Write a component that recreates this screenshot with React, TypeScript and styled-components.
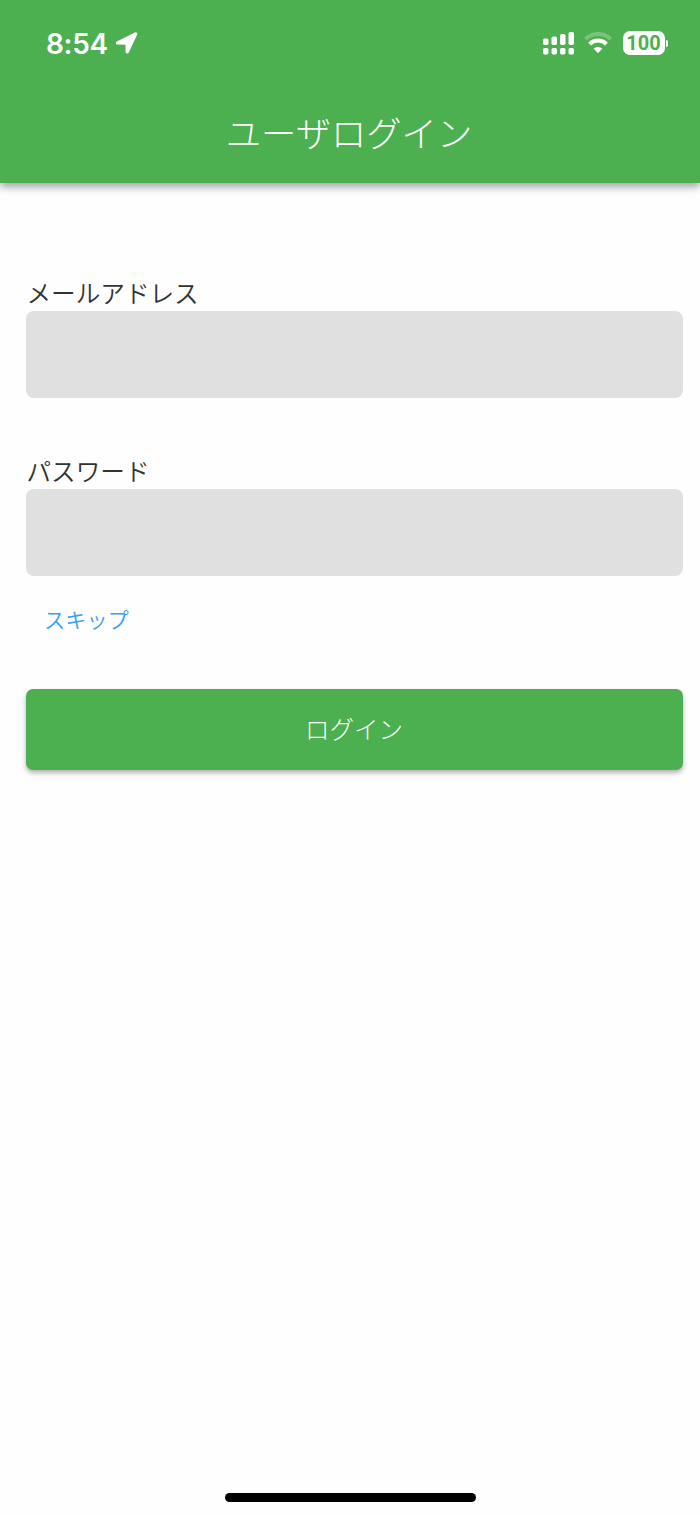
import React from "react";
import styled, { createGlobalStyle } from "styled-components";

const GlobalStyle = createGlobalStyle`
  * { box-sizing: border-box; }
  html, body { margin: 0; padding: 0; background: #fff; }
  body { font-family: "Noto Sans CJK JP", sans-serif; font-weight: 350; }
`;

const Screen = styled.div`
  width: 700px;
  height: 1515px;
  display: flex;
  flex-direction: column;
  overflow: hidden;
  background: #fefefe;
`;

const Header = styled.header`
  flex: none;
  height: 183px;
  display: flex;
  flex-direction: column;
  background: #4caf50;
  color: #fff;
  box-shadow: 0 4px 8px rgba(0, 0, 0, 0.36);
`;

const StatusBar = styled.div`
  height: 86px;
  padding: 0 32px 0 46px;
  display: flex;
  align-items: center;
  justify-content: space-between;
`;

const StatusGroup = styled.div<{ $gap: number }>`
  display: flex;
  align-items: center;
  gap: ${(p) => p.$gap}px;
  svg { display: block; }
`;

const Time = styled.span`
  padding-top: 2px;
  font: 600 28px/34px Inter, sans-serif;
  letter-spacing: -0.3px;
`;

const Battery = styled.div`
  display: flex;
  align-items: center;
  gap: 1px;
`;

const BatteryBody = styled.span`
  width: 42px;
  height: 24px;
  border-radius: 7px;
  background: #fff;
  color: #4caf50;
  text-align: center;
  font: 700 20px/25px Roboto, sans-serif;
  letter-spacing: 0.1px;
`;

const BatteryTip = styled.span`
  width: 2.5px;
  height: 7px;
  border-radius: 0 3px 3px 0;
  background: #fff;
`;

const Title = styled.h1`
  margin: 0;
  height: 92px;
  padding-right: 2px;
  text-align: center;
  font-size: 35.3px;
  line-height: 92px;
  font-weight: 300;
`;

const Form = styled.form`
  flex: 1;
  display: flex;
  flex-direction: column;
  padding: 91px 17px 0 26px;
`;

const Field = styled.label`
  display: flex;
  flex-direction: column;
  height: 178px;
  color: #333;
  font-size: 24.6px;
  line-height: 36px;
`;

const Caption = styled.span`
  height: 37px;
  padding-left: 0.5px;
`;

const Input = styled.input`
  width: 100%;
  height: 87px;
  padding: 0 16px;
  border: 0;
  border-radius: 8px;
  outline: 0;
  background: #e0e0e0;
  font: inherit;
`;

const SkipLink = styled.button`
  align-self: flex-start;
  height: 36px;
  margin: -29px 0 0 18px;
  padding: 0;
  border: 0;
  background: none;
  color: #369ff5;
  font: inherit;
  font-size: 21.2px;
  line-height: 36px;
`;

const LoginButton = styled.button`
  height: 81px;
  margin-top: 52px;
  padding: 0 1px 2px 0;
  border: 0;
  border-radius: 7px;
  background: #4caf50;
  color: #fff;
  font: inherit;
  font-size: 24.5px;
  font-weight: 300;
  box-shadow: 0 3px 5px rgba(0, 0, 0, 0.3);
`;

const HomeIndicator = styled.div`
  flex: none;
  align-self: center;
  width: 251px;
  height: 9px;
  margin-bottom: 13px;
  border-radius: 5px;
  background: #000;
`;

const LocationIcon = () => (
  <svg width="22" height="22" viewBox="0 0 22 22" fill="#fff" stroke="#fff" strokeWidth="1.8" strokeLinejoin="round">
    <path d="M1.2 10.2 19.3 1.4c.8-.4 1.3.2 1 .9L12 20.1c-.4.9-1.6.8-1.6-.3v-7.4c0-.4-.2-.6-.5-.6l-8.4-.1c-1 0-1.2-1.1-.3-1.5Z" />
  </svg>
);

const bars = [
  { x: 0, y: 7.5, h: 6.5 },
  { x: 8.5, y: 5.5, h: 8.5 },
  { x: 17, y: 3, h: 11 },
  { x: 25.5, y: 1, h: 13 },
];

const SignalIcon = () => (
  <svg width="31" height="24" viewBox="0 0 31 24" fill="#fff">
    {bars.map((b) => (
      <React.Fragment key={b.x}>
        <rect x={b.x} y={b.y} width="5.5" height={b.h} rx="1.7" />
        <rect x={b.x} y="17" width="5.5" height="6.5" rx="1.7" />
      </React.Fragment>
    ))}
  </svg>
);

const WifiIcon = () => (
  <svg width="28" height="22" viewBox="0 0 28 22" fill="none" stroke="#fff" strokeWidth="4">
    <path d="M1.3 7.2a18 18 0 0 1 25.4 0" opacity=".25" />
    <path d="M5.6 12.1a11.8 11.8 0 0 1 16.8 0" />
    <path d="M14 14.9c-1.7 0-3.2.6-4.4 1.7l3.6 3.8c.5.5 1.1.5 1.6 0l3.6-3.8a6.4 6.4 0 0 0-4.4-1.7Z" fill="#fff" stroke="none" />
  </svg>
);

export default function App() {
  return (
    <Screen>
      <GlobalStyle />
      <Header>
        <StatusBar>
          <StatusGroup $gap={8}>
            <Time>8:54</Time>
            <LocationIcon />
          </StatusGroup>
          <StatusGroup $gap={10.5}>
            <SignalIcon />
            <WifiIcon />
            <Battery>
              <BatteryBody>100</BatteryBody>
              <BatteryTip />
            </Battery>
          </StatusGroup>
        </StatusBar>
        <Title>ユーザログイン</Title>
      </Header>
      <Form onSubmit={(e) => e.preventDefault()}>
        <Field>
          <Caption>メールアドレス</Caption>
          <Input type="email" />
        </Field>
        <Field>
          <Caption>パスワード</Caption>
          <Input type="password" />
        </Field>
        <SkipLink type="button">スキップ</SkipLink>
        <LoginButton type="submit">ログイン</LoginButton>
      </Form>
      <HomeIndicator />
    </Screen>
  );
}
